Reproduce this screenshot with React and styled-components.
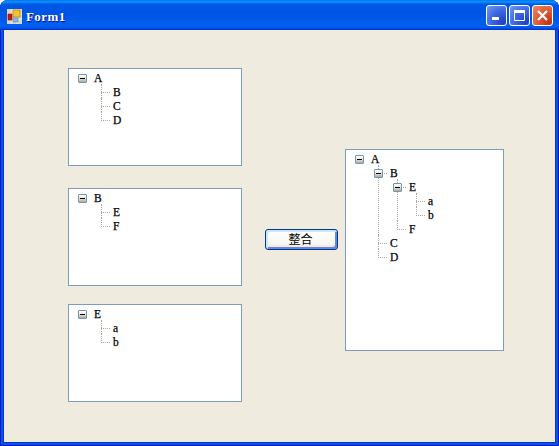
import React from 'react';
import styled, { createGlobalStyle } from 'styled-components';

const GlobalStyle = createGlobalStyle`
  html, body {
    margin: 0;
    padding: 0;
    background: #fff;
  }
  * {
    box-sizing: border-box;
  }
`;

const Window = styled.div`
  width: 559px;
  height: 446px;
  display: flex;
  flex-direction: column;
  border-radius: 8px 8px 0 0;
  overflow: hidden;
  background: #0855dd;
  box-shadow: inset 1px 0 #0019cf, inset -1px 0 #0019cf, inset 0 -1px #0019cf;
`;

const TitleBar = styled.div`
  height: 30px;
  flex: none;
  display: flex;
  align-items: center;
  padding: 0 6px 0 7px;
  background: linear-gradient(180deg, #0a6af0 0, #0997ff 6%, #0058e6 14%, #0054e3 45%, #0060f0 86%, #0058e8 93%, #003dd7 97%, #003dd7 100%);
`;

const Title = styled.span`
  margin: 3px 0 0 4px;
  flex: 1;
  color: #fff;
  font: bold 13px/16px "Liberation Serif", serif;
  letter-spacing: 0.4px;
  text-shadow: 1px 1px #0f1089;
`;

const Controls = styled.div`
  display: flex;
  gap: 2px;
`;

const ControlButton = styled.div`
  width: 21px;
  height: 21px;
  display: flex;
  align-items: center;
  justify-content: center;
  border: 1px solid #fff;
  border-radius: 3px;
  background: ${props => props.$close
    ? 'radial-gradient(circle at 85% 85%, #c0330f 0, #e0603a 55%, #ea8a68 100%)'
    : 'radial-gradient(circle at 85% 85%, #1f3fc8 0, #3f6be4 55%, #7a9af0 100%)'};
`;

const Client = styled.div`
  flex: 1;
  margin: 0 4px 4px;
  display: flex;
  align-items: flex-start;
  background: #efebde;
  box-shadow: 0 0 0 1px #0831d9;
`;

const LeftColumn = styled.div`
  margin: 38px 0 0 64px;
  display: flex;
  flex-direction: column;
`;

const TreePanel = styled.div`
  width: ${props => props.$width}px;
  height: ${props => props.$height}px;
  margin-top: ${props => props.$top || 0}px;
  margin-left: ${props => props.$left || 0}px;
  flex: none;
  padding: 1px 0 0 9px;
  border: 1px solid #7f9db9;
  background: #fff;
`;

const Branch = styled.ul`
  list-style: none;
  margin: 0;
  padding: 0 0 0 ${props => props.$root ? 0 : 19}px;
`;

const Node = styled.li`
  position: relative;

  &::before {
    content: ${props => props.$root ? 'none' : '""'};
    position: absolute;
    left: 4px;
    top: 0;
    height: ${props => props.$last ? '9px' : '100%'};
    border-left: 1px dotted #aca899;
  }
`;

const Row = styled.div`
  position: relative;
  height: 14px;
  display: flex;
  align-items: flex-start;

  &::before {
    content: ${props => props.$root ? 'none' : '""'};
    position: absolute;
    left: 4px;
    top: 8px;
    width: 9px;
    border-top: 1px dotted #aca899;
  }
`;

const Expander = styled.span`
  position: relative;
  z-index: 1;
  width: 9px;
  height: 9px;
  margin-top: 4px;
  flex: none;
  border: 1px solid #7196b8;
  border-radius: 1px;
  background: linear-gradient(180deg, #fff 0, #ecebe2 40%, #aeaa96 100%);

  &::after {
    content: "";
    position: absolute;
    left: 1px;
    top: 3px;
    width: 5px;
    height: 1px;
    background: #000;
  }
`;

const Spacer = styled.span`
  width: 9px;
  flex: none;
`;

const Label = styled.span`
  position: relative;
  z-index: 1;
  margin: 1px 0 0 7px;
  color: #000;
  font: 11.5px/14px "Liberation Serif", serif;
  -webkit-text-stroke: 0.25px #000;
`;

const MergeButton = styled.button`
  width: 73px;
  height: 21px;
  margin: 199px 0 0 23px;
  flex: none;
  padding: 0 2px 3px 0;
  border: 1px solid #003c74;
  border-radius: 3px;
  color: #000;
  font: 12px/17px "Noto Sans CJK SC", sans-serif;
  background: linear-gradient(180deg, #fff 0, #f8f7f2 70%, #e6e3d8 100%);
  box-shadow: inset 2px 2px 0 #cee7ff, inset -2px -2px 0 #6982ee;
`;

const IconSlot = styled.span`
  display: flex;
  margin-top: 2px;
`;

function AppIcon() {
  return (
    <svg width="15" height="15" viewBox="0 0 15 15">
      <rect x="0" y="0" width="15" height="15" fill="#d8d8c8" />
      <path d="M5 0v15M0 5h15M10 0v15M0 10h15" stroke="#f4f4ec" strokeWidth="1" />
      <rect x="1" y="5" width="4" height="6" fill="#c81818" stroke="#801010" strokeWidth="0.6" />
      <rect x="6" y="1" width="7" height="7" fill="#f2c430" stroke="#b88a10" strokeWidth="0.8" />
      <rect x="6" y="9" width="5" height="4" fill="#8ab4ea" stroke="#5a86c8" strokeWidth="0.6" />
    </svg>
  );
}

function MinimizeIcon() {
  return (
    <svg width="13" height="13" viewBox="0 0 13 13">
      <rect x="2" y="8" width="7" height="3" fill="#fff" />
    </svg>
  );
}

function MaximizeIcon() {
  return (
    <svg width="13" height="13" viewBox="0 0 13 13">
      <path d="M1.5 3.5h10v8h-10z" fill="none" stroke="#fff" />
      <rect x="1" y="1" width="11" height="3" fill="#fff" />
    </svg>
  );
}

function CloseIcon() {
  return (
    <svg width="13" height="13" viewBox="0 0 13 13">
      <path d="M2 2l9 9M11 2l-9 9" stroke="#fff" strokeWidth="2.2" />
    </svg>
  );
}

function TreeNode({ node, root, last }) {
  const kids = node.children;
  return (
    <Node $root={root} $last={last}>
      <Row $root={root}>
        {kids ? <Expander /> : <Spacer />}
        <Label>{node.name}</Label>
      </Row>
      {kids &&
        <Branch>
          {kids.map((kid, i) => (
            <TreeNode key={kid.name} node={kid} last={i === kids.length - 1} />
          ))}
        </Branch>
      }
    </Node>
  );
}

const leaf = name => ({ name });

const treeA = { name: 'A', children: [leaf('B'), leaf('C'), leaf('D')] };
const treeB = { name: 'B', children: [leaf('E'), leaf('F')] };
const treeE = { name: 'E', children: [leaf('a'), leaf('b')] };
const merged = {
  name: 'A',
  children: [
    { name: 'B', children: [{ name: 'E', children: [leaf('a'), leaf('b')] }, leaf('F')] },
    leaf('C'),
    leaf('D'),
  ],
};

function Tree({ data, ...rest }) {
  return (
    <TreePanel {...rest}>
      <Branch $root>
        <TreeNode node={data} root />
      </Branch>
    </TreePanel>
  );
}

export default function App() {
  return (
    <>
      <GlobalStyle />
      <Window>
        <TitleBar>
          <IconSlot><AppIcon /></IconSlot>
          <Title>Form1</Title>
          <Controls>
            <ControlButton><MinimizeIcon /></ControlButton>
            <ControlButton><MaximizeIcon /></ControlButton>
            <ControlButton $close><CloseIcon /></ControlButton>
          </Controls>
        </TitleBar>
        <Client>
          <LeftColumn>
            <Tree data={treeA} $width={174} $height={98} />
            <Tree data={treeB} $width={174} $height={98} $top={22} />
            <Tree data={treeE} $width={174} $height={98} $top={18} />
          </LeftColumn>
          <MergeButton>整合</MergeButton>
          <Tree data={merged} $width={159} $height={202} $top={119} $left={7} />
        </Client>
      </Window>
    </>
  );
}
